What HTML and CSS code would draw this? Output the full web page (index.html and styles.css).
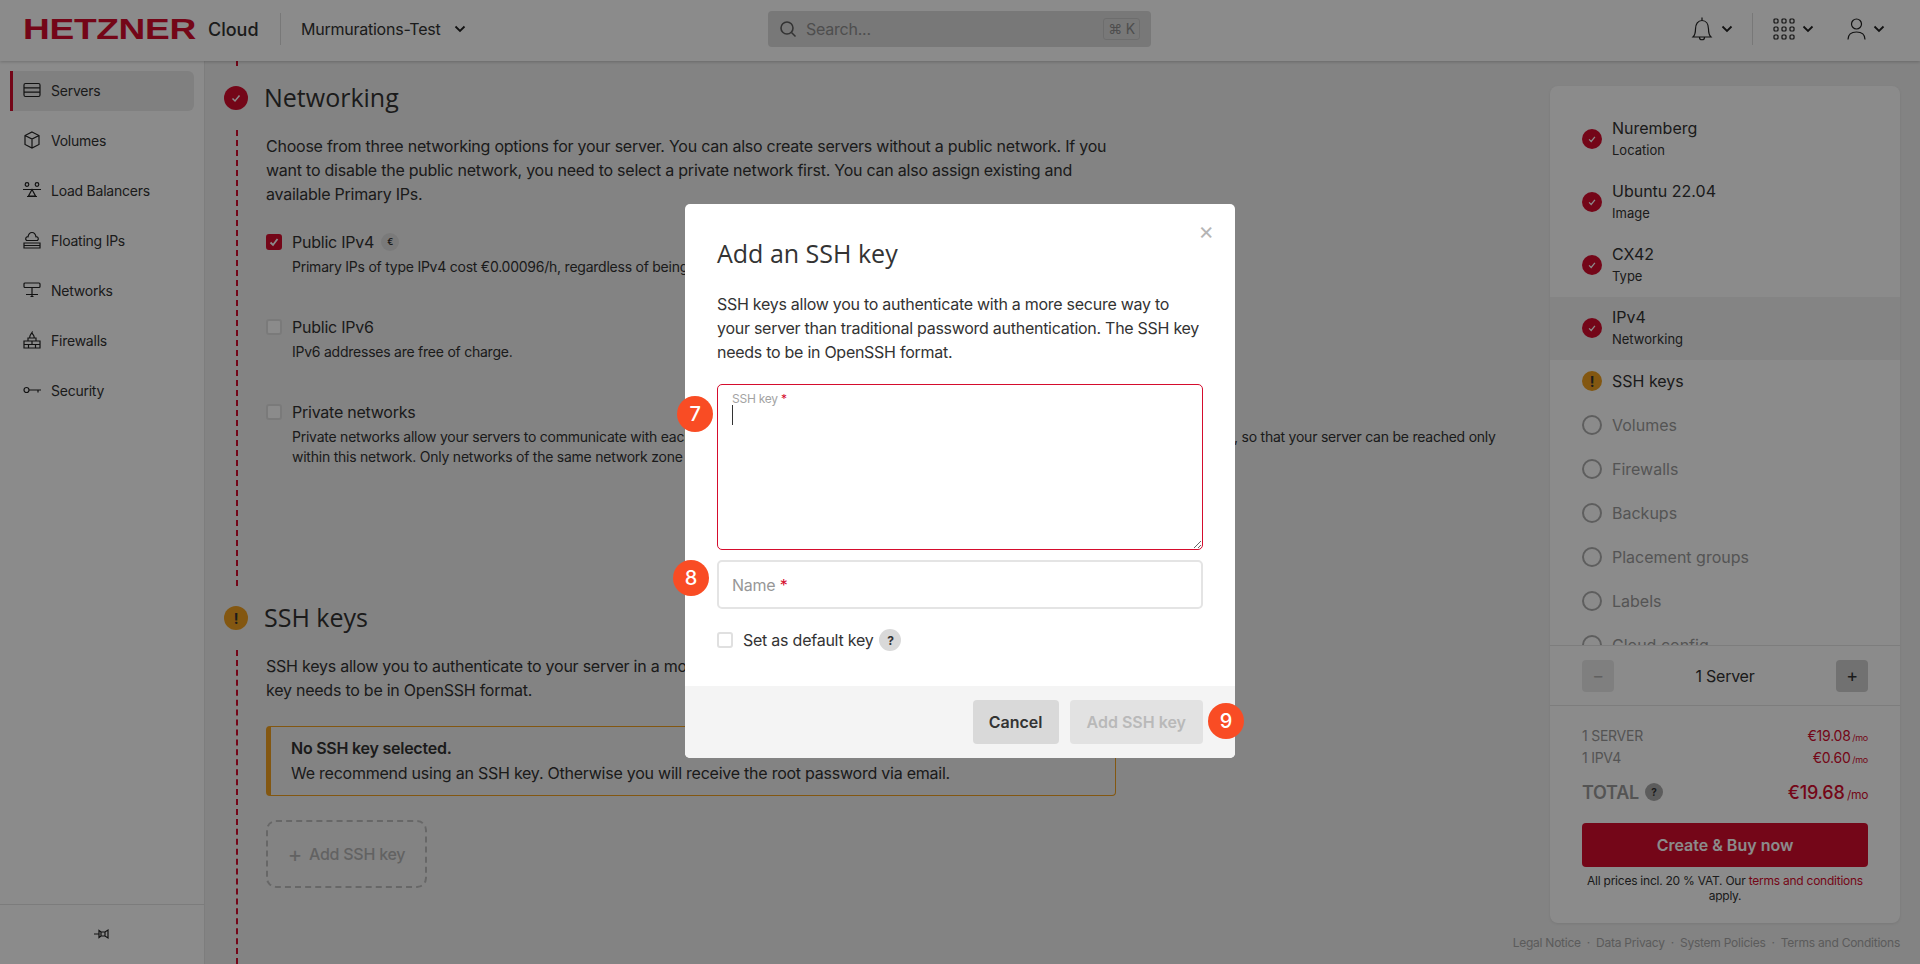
FILE: index.html
```html
<!DOCTYPE html>
<html lang="en">
<head>
    <meta charset="UTF-8">
    <meta name="viewport" content="width=device-width, initial-scale=1.0">
    <title>Add an SSH key</title>
    <link rel="stylesheet" href="styles.css">
</head>
<body>
    <header class="topbar">
        <svg class="logo" width="173" height="30" viewBox="0 0 173 30"><text x="0" y="25" textLength="173" lengthAdjust="spacingAndGlyphs">HETZNER</text></svg>
        <span class="brand">Cloud</span>
        <span class="top-sep"></span>
        <span class="project">Murmurations-Test</span>
        <svg class="chev project-chev" width="12" height="8" viewBox="0 0 12 8"><path d="M1.5 1.5 6 6l4.5-4.5"/></svg>
        <div class="search">
            <svg width="18" height="18" viewBox="0 0 18 18" fill="none" stroke="#5f5f5f" stroke-width="1.6"><circle cx="8" cy="8" r="6"/><path d="m12.5 12.5 4 4"/></svg>
            <span class="search-text">Search...</span>
            <kbd>⌘ K</kbd>
        </div>
        <div class="top-icons">
            <svg class="line-icon" width="24" height="28" viewBox="0 0 24 28"><path d="M3 22c2-2 2.5-4 2.5-8 0-5 2.500-8.500 6.500-8.500s6.500 3.500 6.500 8.500c0 4 .5 6 2.500 8zM12 2.500v3M9.500 22.500c0 3 5 3 5 0"/></svg>
            <svg class="chev" width="12" height="8" viewBox="0 0 12 8"><path d="M1.5 1.5 6 6l4.5-4.5"/></svg>
            <span class="top-sep icons-sep"></span>
            <svg class="line-icon" width="22" height="22" viewBox="0 0 22 22"><rect x="1" y="1" width="4" height="4" rx="1"/><rect x="9" y="1" width="4" height="4" rx="1"/><rect x="17" y="1" width="4" height="4" rx="1"/><rect x="1" y="9" width="4" height="4" rx="1"/><rect x="9" y="9" width="4" height="4" rx="1"/><rect x="17" y="9" width="4" height="4" rx="1"/><rect x="1" y="17" width="4" height="4" rx="1"/><rect x="9" y="17" width="4" height="4" rx="1"/><rect x="17" y="17" width="4" height="4" rx="1"/></svg>
            <svg class="chev" width="12" height="8" viewBox="0 0 12 8"><path d="M1.5 1.5 6 6l4.5-4.5"/></svg>
            <svg class="line-icon user-icon" width="19" height="22" viewBox="0 0 19 22"><circle cx="9.5" cy="6" r="5"/><path d="M1 21.500c0-5 3-7.500 8.500-7.500s8.500 2.500 8.500 7.500"/></svg>
            <svg class="chev" width="12" height="8" viewBox="0 0 12 8"><path d="M1.5 1.5 6 6l4.5-4.5"/></svg>
        </div>
    </header>

    <div class="app">
        <nav class="sidebar">
            <div class="nav-items">
                <a class="nav-item active">
                    <svg class="line-icon" width="18" height="18" viewBox="0 0 18 18"><rect x="1" y="2.5" width="16" height="13" rx="1.5"/><path d="M1 6.800h16M1 11.200h16"/></svg>
                    Servers
                </a>
                <a class="nav-item">
                    <svg class="line-icon" width="18" height="18" viewBox="0 0 18 18"><path d="M9 1l7 3.500v9L9 17l-7-3.500v-9zM2 4.500 9 8l7-3.500M9 8v9"/></svg>
                    Volumes
                </a>
                <a class="nav-item">
                    <svg class="line-icon" width="18" height="18" viewBox="0 0 18 18"><circle cx="4" cy="3.5" r="1.8"/><circle cx="14" cy="3.5" r="1.8"/><path d="M0 8.500h18M9 8.500 5.500 15h7zM4 15.500h10"/></svg>
                    Load Balancers
                </a>
                <a class="nav-item">
                    <svg class="line-icon" width="18" height="18" viewBox="0 0 18 18"><path d="M3.500 9.500c-2-2 0-4 1.500-3.700C5.500 3 7 1.500 9 1.500s3.500 1.500 4 4.300c1.500-.3 3.500 1.700 1.500 3.700zM1 12h16v5H1zM1 14.500h16"/></svg>
                    Floating IPs
                </a>
                <a class="nav-item">
                    <svg class="line-icon" width="18" height="18" viewBox="0 0 18 18"><rect x="1" y="2" width="16" height="4.5" rx="1"/><path d="M9 6.500v9M3 13.500h12M7.500 15.500h3"/></svg>
                    Networks
                </a>
                <a class="nav-item">
                    <svg class="line-icon" width="18" height="18" viewBox="0 0 18 18"><path d="M1 10h16v7H1zM1 13.500h16M9 10v3.500M5.500 13.500V17M12.500 13.500V17M5 10V7h8v3M7 7c-1-2 .5-3 2-5.500 0 2 3 3 2 5.500"/></svg>
                    Firewalls
                </a>
                <a class="nav-item">
                    <svg class="line-icon" width="18" height="18" viewBox="0 0 18 18"><circle cx="3.5" cy="9" r="2.5"/><path d="M6 9h12M15 9v2.500"/></svg>
                    Security
                </a>
            </div>
            <div class="sidebar-foot">
                <svg class="line-icon" width="16" height="14" viewBox="0 0 16 14"><path d="M0 7h5M5 3.500 7 5h4l3-2v8l-3-2H7l-2 1.500zM7 5v4M11 5v4"/></svg>
            </div>
        </nav>

        <main class="content">
            <div class="wizard">
                <div class="step-stub"></div>
                <div class="step-head">
                    <span class="status done"><svg width="12" height="12" viewBox="0 0 12 12"><path d="M2.500 6.500 5 9l4.500-5.500"/></svg></span>
                    <h2>Networking</h2>
                </div>
                <section class="step-body networking">
                    <p class="lead">Choose from three networking options for your server. You can also create servers without a public network. If you want to disable the public network, you need to select a private network first. You can also assign existing and available Primary IPs.</p>
                    <div class="option">
                        <span class="check checked"><svg width="12" height="12" viewBox="0 0 12 12"><path d="M2.500 6.500 5 9l4.500-6"/></svg></span>
                        <div>
                            <div class="option-title">Public IPv4 <span class="euro">€</span></div>
                            <div class="option-desc">Primary IPs of type IPv4 cost €0.00096/h, regardless of being assigned to a server or not.</div>
                        </div>
                    </div>
                    <div class="option">
                        <span class="check"></span>
                        <div>
                            <div class="option-title">Public IPv6</div>
                            <div class="option-desc">IPv6 addresses are free of charge.</div>
                        </div>
                    </div>
                    <div class="option">
                        <span class="check"></span>
                        <div>
                            <div class="option-title">Private networks</div>
                            <div class="option-desc private">Private networks allow your servers to communicate with each other through a dedicated network interface. Attach your server to a private network, so that your server can be reached only within this network. Only networks of the same network zone as the selected location can be attached.</div>
                        </div>
                    </div>
                </section>
                <div class="step-head">
                    <span class="status warn">!</span>
                    <h2>SSH keys</h2>
                </div>
                <section class="step-body ssh">
                    <p class="lead nowrap">SSH keys allow you to authenticate to your server in a more secure way than traditional password authentication. The SSH<br>key needs to be in OpenSSH format.</p>
                    <div class="notice">
                        <strong>No SSH key selected.</strong>
                        <div>We recommend using an SSH key. Otherwise you will receive the root password via email.</div>
                    </div>
                    <div class="add-key"><span class="plus">+</span> Add SSH key</div>
                </section>
            </div>

            <aside class="summary-col">
                <div class="summary">
                    <ul class="summary-list">
                        <li class="sum-row"><span class="status small done"><svg width="10" height="10" viewBox="0 0 12 12"><path d="M2.500 6.500 5 9l4.500-5.500"/></svg></span><div class="sum-text"><div class="sum-title">Nuremberg</div><div class="sum-sub">Location</div></div></li>
                        <li class="sum-row"><span class="status small done"><svg width="10" height="10" viewBox="0 0 12 12"><path d="M2.500 6.500 5 9l4.500-5.500"/></svg></span><div class="sum-text"><div class="sum-title">Ubuntu 22.04</div><div class="sum-sub">Image</div></div></li>
                        <li class="sum-row"><span class="status small done"><svg width="10" height="10" viewBox="0 0 12 12"><path d="M2.500 6.500 5 9l4.500-5.500"/></svg></span><div class="sum-text"><div class="sum-title">CX42</div><div class="sum-sub">Type</div></div></li>
                        <li class="sum-row current"><span class="status small done"><svg width="10" height="10" viewBox="0 0 12 12"><path d="M2.500 6.500 5 9l4.500-5.500"/></svg></span><div class="sum-text"><div class="sum-title">IPv4</div><div class="sum-sub">Networking</div></div></li>
                        <li class="sum-row plain"><span class="status small warn">!</span><div class="sum-title">SSH keys</div></li>
                        <li class="sum-row plain todo"><span class="ring"></span><div class="sum-title">Volumes</div></li>
                        <li class="sum-row plain todo"><span class="ring"></span><div class="sum-title">Firewalls</div></li>
                        <li class="sum-row plain todo"><span class="ring"></span><div class="sum-title">Backups</div></li>
                        <li class="sum-row plain todo"><span class="ring"></span><div class="sum-title">Placement groups</div></li>
                        <li class="sum-row plain todo"><span class="ring"></span><div class="sum-title">Labels</div></li>
                        <li class="sum-row plain todo"><span class="ring"></span><div class="sum-title">Cloud config</div></li>
                    </ul>
                    <div class="stepper">
                        <button class="step-btn" type="button">−</button>
                        <span>1 Server</span>
                        <button class="step-btn on" type="button">+</button>
                    </div>
                    <div class="costs">
                        <div class="cost-row"><span>1 SERVER</span><span class="price">€19.08 <small>/mo</small></span></div>
                        <div class="cost-row"><span>1 IPV4</span><span class="price">€0.60 <small>/mo</small></span></div>
                        <div class="cost-row total"><span>TOTAL <span class="help dark">?</span></span><span class="price">€19.68 <small>/mo</small></span></div>
                        <button class="buy" type="button">Create &amp; Buy now</button>
                        <p class="vat">All prices incl. 20 % VAT. Our <a>terms and conditions</a> apply.</p>
                    </div>
                </div>
                <div class="legal">
                    <a>Legal Notice</a><i>·</i><a>Data Privacy</a><i>·</i><a>System Policies</a><i>·</i><a>Terms and Conditions</a>
                </div>
            </aside>
        </main>
    </div>

    <div class="overlay">
        <div class="modal">
            <span class="close">×</span>
            <div class="modal-body">
                <h3>Add an SSH key</h3>
                <p>SSH keys allow you to authenticate with a more secure way to your server than traditional password authentication. The SSH key needs to be in OpenSSH format.</p>
                <div class="field">
                    <label class="float-label">SSH key <b>*</b></label>
                    <span class="caret"></span>
                    <textarea class="key-input"></textarea>
                </div>
                <div class="field">
                    <label class="name-label">Name <b>*</b></label>
                    <input class="name-input" type="text">
                </div>
                <div class="default-row">
                    <span class="check"></span>
                    <span>Set as default key</span>
                    <span class="help">?</span>
                </div>
            </div>
            <div class="modal-foot">
                <button class="btn cancel" type="button">Cancel</button>
                <button class="btn disabled" type="button">Add SSH key</button>
            </div>
            <span class="badge badge-7">7</span>
            <span class="badge badge-8">8</span>
            <span class="badge badge-9">9</span>
        </div>
    </div>
</body>
</html>
```

FILE: styles.css
```css
* {
    box-sizing: border-box;
}

body {
    font-family: 'Inter', sans-serif;
    font-size: 16px;
    letter-spacing: -0.015em;
    color: #333;
    background-color: #f0f0f0;
    margin: 0;
    height: 964px;
    overflow: hidden;
}

h2, h3, p, ul {
    margin: 0;
    padding: 0;
    font-weight: 400;
}

ul {
    list-style: none;
}

button {
    font-family: inherit;
    letter-spacing: inherit;
    border: none;
}

.line-icon {
    fill: none;
    stroke: #222;
    stroke-width: 1.2;
    flex: none;
}

.chev {
    fill: none;
    stroke: #222;
    stroke-width: 1.8;
    flex: none;
}

/* top bar */
.topbar {
    position: relative;
    z-index: 2;
    height: 61px;
    display: flex;
    align-items: center;
    padding: 0 0 3px 23px;
    background-color: #fff;
    box-shadow: 0 1px 3px rgba(0, 0, 0, 0.2);
}

.logo {
    flex: none;
}

.logo text {
    font-family: 'Liberation Sans', sans-serif;
    font-weight: 700;
    font-size: 29px;
    fill: #d50c2d;
}

.brand {
    margin-left: 12px;
    font-size: 18px;
    font-weight: 500;
    letter-spacing: 0;
    width: 72px;
}

.top-sep {
    width: 1px;
    height: 32px;
    background-color: #ddd;
    flex: none;
}

.project {
    margin-left: 20px;
    width: 153px;
    white-space: nowrap;
}

.search {
    position: absolute;
    left: 768px;
    top: 11px;
    width: 383px;
    height: 36px;
    display: flex;
    align-items: center;
    padding: 0 11px;
    background-color: #dcdcdc;
    border-radius: 4px;
}

.search-text {
    margin-left: 9px;
    color: #8f8f8f;
    flex: 1;
}

kbd {
    font-family: inherit;
    font-size: 14px;
    color: #8f8f8f;
    border: 1px solid #c9c9c9;
    border-radius: 3px;
    padding: 1px 4px;
    height: 22px;
    line-height: 18px;
}

.top-icons {
    margin-left: auto;
    display: flex;
    align-items: center;
    padding-right: 35px;
}

.top-icons .chev {
    margin-left: 7px;
}

.icons-sep {
    margin: 0 20px 0 19px;
}

.top-icons .user-icon {
    margin-left: 33px;
}

/* page */
.app {
    display: flex;
    height: 903px;
}

.sidebar {
    width: 205px;
    flex: none;
    background-color: #fff;
    border-right: 1px solid #e6e6e6;
    display: flex;
    flex-direction: column;
    justify-content: space-between;
}

.nav-items {
    padding-top: 10px;
}

.nav-item {
    display: flex;
    align-items: center;
    gap: 10px;
    height: 40px;
    margin: 0 10px 10px;
    padding: 0 0 2px 13px;
    font-size: 14px;
    border-radius: 0 6px 6px 0;
}

.nav-item.active {
    background-color: #ebebeb;
    border-left: 3px solid #d50c2d;
    padding-left: 10px;
}

.sidebar-foot {
    height: 60px;
    border-top: 1px solid #e4e4e4;
    display: flex;
    align-items: center;
    justify-content: center;
    padding-bottom: 2px;
}

.content {
    flex: 1;
    display: flex;
    min-width: 0;
}

.wizard {
    flex: 1;
    min-width: 0;
}

.step-stub {
    height: 5px;
    margin-left: 31px;
    border-left: 2px dashed #d50c2d;
}

.step-head {
    height: 64px;
    display: flex;
    align-items: center;
    margin-left: 19px;
}

.step-head h2 {
    font-family: 'Open Sans', sans-serif;
    font-size: 25px;
    letter-spacing: 0;
    margin: 0 0 3px 16px;
}

.status {
    width: 24px;
    height: 24px;
    border-radius: 50%;
    flex: none;
    display: flex;
    align-items: center;
    justify-content: center;
    font-weight: 700;
    font-size: 14px;
    color: #333;
}

.status svg {
    fill: none;
    stroke: #fff;
    stroke-width: 1.5;
}

.status.done {
    background-color: #d50c2d;
}

.status.warn {
    background-color: #f0a020;
}

.status.small {
    width: 20px;
    height: 20px;
}

.step-body {
    margin-left: 31px;
    border-left: 2px dashed #d50c2d;
    padding: 4px 0 0 28px;
}

.networking {
    height: 456px;
}

.ssh {
    height: 314px;
}

.lead {
    width: 850px;
    line-height: 24px;
    font-size: 16px;
}

.lead.nowrap {
    white-space: nowrap;
}

.option {
    display: flex;
    gap: 10px;
    margin-top: 24px;
    margin-bottom: 38px;
}

.option + .option {
    margin-top: 0;
}

.check {
    width: 16px;
    height: 16px;
    border: 2px solid #e0e0e0;
    border-radius: 3px;
    background-color: #fff;
    flex: none;
    display: flex;
    align-items: center;
    justify-content: center;
    margin-top: 4px;
}

.check.checked {
    background-color: #d50c2d;
    border-color: #d50c2d;
}

.check svg {
    fill: none;
    stroke: #fff;
    stroke-width: 1.8;
}

.option-title {
    line-height: 24px;
    display: flex;
    align-items: center;
    gap: 7px;
}

.euro {
    width: 18px;
    height: 18px;
    border-radius: 50%;
    background-color: #e0e0e0;
    font-size: 9px;
    font-weight: 600;
    display: flex;
    align-items: center;
    justify-content: center;
}

.option-desc {
    margin-top: 3px;
    font-size: 14px;
    line-height: 20px;
    white-space: nowrap;
}

.option-desc.private {
    white-space: normal;
    width: 1240px;
}

.notice {
    width: 850px;
    height: 70px;
    margin-top: 24px;
    padding: 9px 20px;
    border: 1px solid #f0a020;
    border-left-width: 5px;
    border-radius: 4px;
    line-height: 25px;
}

.notice strong {
    display: block;
    font-weight: 600;
}

.add-key {
    width: 161px;
    height: 68px;
    margin-top: 24px;
    border: 2px dashed #bdbdbd;
    border-radius: 10px;
    display: flex;
    align-items: center;
    justify-content: center;
    gap: 7px;
    color: #b5b5b5;
    font-weight: 500;
}

.plus {
    font-size: 22px;
    font-weight: 400;
}

/* summary */
.summary-col {
    width: 370px;
    flex: none;
    padding: 25px 20px 0 0;
}

.summary {
    height: 837px;
    background-color: #fff;
    border-radius: 8px;
    box-shadow: 0 1px 3px rgba(0, 0, 0, 0.08);
    display: flex;
    flex-direction: column;
}

.summary-list {
    height: 559px;
    padding-top: 22px;
    overflow: hidden;
    flex: none;
}

.sum-row {
    height: 63px;
    display: flex;
    align-items: center;
    gap: 10px;
    padding: 0 0 2px 32px;
}

.sum-row.current {
    background-color: #f2f2f2;
}

.sum-row.plain {
    height: 44px;
}

.sum-row.todo {
    color: #9b9b9b;
}

.sum-text {
    padding-bottom: 3px;
}

.sum-title {
    font-size: 16px;
    line-height: 24px;
    letter-spacing: 0;
}

.sum-sub {
    font-size: 13px;
    line-height: 18px;
    letter-spacing: 0;
    margin-top: 1px;
}

.ring {
    width: 20px;
    height: 20px;
    border: 2px solid #adadad;
    border-radius: 50%;
    flex: none;
}

.stepper {
    height: 61px;
    border-top: 1px solid #e6e6e6;
    border-bottom: 1px solid #e6e6e6;
    padding: 0 32px;
    display: flex;
    align-items: center;
    justify-content: space-between;
    flex: none;
}

.step-btn {
    width: 32px;
    height: 32px;
    border-radius: 4px;
    background-color: #eaeaea;
    color: #b0b0b0;
    font-size: 18px;
    padding: 0;
}

.step-btn.on {
    background-color: #cfcfcf;
    color: #333;
}

.costs {
    padding: 18px 32px 0;
}

.cost-row {
    display: flex;
    justify-content: space-between;
    align-items: center;
    height: 22px;
    font-size: 14px;
    color: #9a9a9a;
}

.price {
    color: #d50c2d;
    font-size: 14px;
    word-spacing: -2px;
}

.price small {
    font-size: 9px;
    letter-spacing: -0.03em;
}

.cost-row.total {
    height: 30px;
    margin-top: 9px;
    font-size: 18px;
    font-weight: 600;
}

.cost-row.total > span:first-child {
    display: flex;
    align-items: center;
    gap: 6px;
}

.cost-row.total .price {
    font-size: 18px;
    font-weight: 500;
}

.cost-row.total .price small {
    font-size: 12px;
    font-weight: 400;
}

.buy {
    display: block;
    width: 100%;
    height: 44px;
    margin-top: 16px;
    background-color: #d50c2d;
    color: #fff;
    font-size: 16px;
    font-weight: 600;
    letter-spacing: 0;
    border-radius: 4px;
}

.vat {
    margin-top: 6px;
    font-size: 12px;
    line-height: 15px;
    letter-spacing: -0.02em;
    text-align: center;
}

.vat a {
    color: #d50c2d;
}

.legal {
    margin-top: 10px;
    display: flex;
    justify-content: flex-end;
    font-size: 12px;
    line-height: 20px;
    white-space: nowrap;
    color: #a8a8a8;
}

.legal i {
    margin: 0 6px;
    font-style: normal;
}

/* modal */
.overlay {
    position: fixed;
    inset: 0;
    z-index: 5;
    background-color: rgba(0, 0, 0, 0.455);
    display: flex;
    justify-content: center;
    align-items: flex-start;
    padding-top: 204px;
}

.modal {
    position: relative;
    width: 550px;
    height: 554px;
    background-color: #fff;
    border-radius: 5px;
    overflow: visible;
    display: flex;
    flex-direction: column;
}

.close {
    position: absolute;
    right: 21px;
    top: 12px;
    font-size: 24px;
    color: #b5b5b5;
}

.modal-body {
    flex: 1;
    padding: 32px 32px 0;
}

.modal-body h3 {
    font-family: 'Open Sans', sans-serif;
    font-size: 25px;
    letter-spacing: 0;
    line-height: 34px;
}

.modal-body p {
    margin-top: 22px;
    line-height: 24px;
    letter-spacing: -0.017em;
}

.field {
    position: relative;
    margin-top: 10px;
}

.modal-body p + .field {
    margin-top: 20px;
}

.float-label {
    position: absolute;
    left: 15px;
    top: 7px;
    font-size: 12px;
    color: #a3a3a3;
}

b {
    color: #d50c2d;
    font-weight: 400;
}

.caret {
    position: absolute;
    left: 15px;
    top: 21px;
    width: 1px;
    height: 20px;
    background-color: #333;
}

.key-input {
    display: block;
    width: 100%;
    height: 166px;
    border: 1px solid #d50c2d;
    border-radius: 5px;
    outline: none;
}

.name-label {
    position: absolute;
    left: 15px;
    top: 15px;
    color: #979797;
}

.name-input {
    display: block;
    width: 100%;
    height: 49px;
    border: 2px solid #e4e4e4;
    border-radius: 5px;
    outline: none;
}

.default-row {
    display: flex;
    align-items: center;
    margin-top: 20px;
    height: 22px;
}

.default-row .check {
    margin: 0 10px 0 0;
}

.help {
    width: 22px;
    height: 22px;
    margin-left: 6px;
    border-radius: 50%;
    background-color: #d9d9d9;
    font-size: 12px;
    font-weight: 700;
    display: inline-flex;
    align-items: center;
    justify-content: center;
}

.help.dark {
    width: 18px;
    height: 18px;
    margin-left: 0;
    font-size: 10px;
    background-color: #aaa;
    color: #333;
}

.modal-foot {
    height: 72px;
    background-color: #f4f4f4;
    border-radius: 0 0 5px 5px;
    padding: 14px 32px;
    display: flex;
    justify-content: flex-end;
    gap: 11px;
    flex: none;
}

.btn {
    height: 44px;
    font-size: 16px;
    font-weight: 600;
    letter-spacing: 0;
    border-radius: 4px;
    padding: 0 16px;
}

.btn.cancel {
    background-color: #d9d9d9;
    color: #333;
}

.btn.disabled {
    background-color: #e2e2e2;
    color: #b9b9b9;
    padding: 0 17px;
}

.badge {
    position: absolute;
    width: 36px;
    height: 36px;
    border-radius: 50%;
    background-color: #f94c24;
    color: #fff;
    font-size: 20px;
    font-weight: 500;
    display: flex;
    align-items: center;
    justify-content: center;
}

.badge-7 {
    left: -8px;
    top: 192px;
}

.badge-8 {
    left: -12px;
    top: 356px;
}

.badge-9 {
    left: 523px;
    top: 499px;
}
```
